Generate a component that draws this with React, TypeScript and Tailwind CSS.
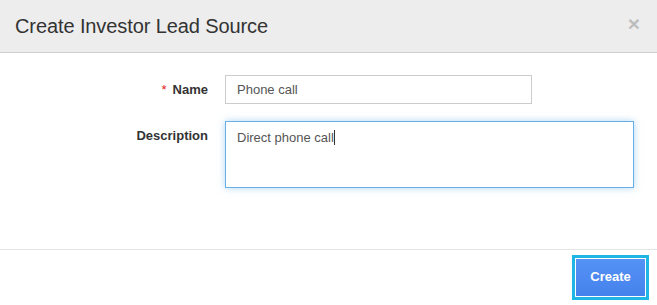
import React from 'react';

export default function App() {
    return (
        <div className="w-[657px] h-[305px] bg-white flex flex-col overflow-hidden" style={{ fontFamily: '"Liberation Sans", Arial, sans-serif' }}>
            {/* Header */}
            <div className="h-[53px] shrink-0 bg-[#ededed] border-b border-[#cfcfcf] flex items-center justify-between pl-[15px] pr-[17px]">
                <h1 className="text-[20px] tracking-[-0.1px] text-[#333] leading-none pb-[1px]">Create Investor Lead Source</h1>
                <span className="text-[#bdbdbd] text-[21px] font-bold leading-none pb-[6px]">×</span>
            </div>

            {/* Body */}
            <div className="flex-1 pt-[22px]">
                <div className="flex items-start">
                    <label className="w-[209px] pr-[1px] text-right text-[13px] font-bold text-[#333] pt-[5px]">
                        <span className="text-[#e02020] font-normal mr-[6px]">*</span>Name
                    </label>
                    <div className="ml-[16px] w-[307px] h-[29px] border border-[#ccc] flex items-center px-[11px] text-[13px] text-[#555]">
                        Phone call
                    </div>
                </div>
                <div className="flex items-start mt-[17px]">
                    <label className="w-[209px] pr-[1px] text-right text-[13px] font-bold text-[#333] pt-[5px]">
                        Description
                    </label>
                    <div className="ml-[16px] w-[409px] h-[67px] border border-[#66afe9] shadow-[0_0_7px_rgba(102,175,233,0.5)] px-[11px] pt-[6px] text-[13px] text-[#555]">
                        Direct phone call<span className="inline-block w-[1px] h-[15px] bg-[#333] align-[-3px]"></span>
                    </div>
                </div>
            </div>

            {/* Footer */}
            <div className="h-[56px] shrink-0 border-t border-[#e5e5e5] flex items-center justify-end pr-[8px]">
                <button className="w-[77px] h-[45px] border-[3px] border-[#1fb6e6] bg-white p-[1px]">
                    <span className="w-full h-full flex items-center justify-center pb-[1px] bg-gradient-to-b from-[#5592f5] to-[#4581ec] text-white text-[13px] font-bold">
                        Create
                    </span>
                </button>
            </div>
        </div>
    );
}
